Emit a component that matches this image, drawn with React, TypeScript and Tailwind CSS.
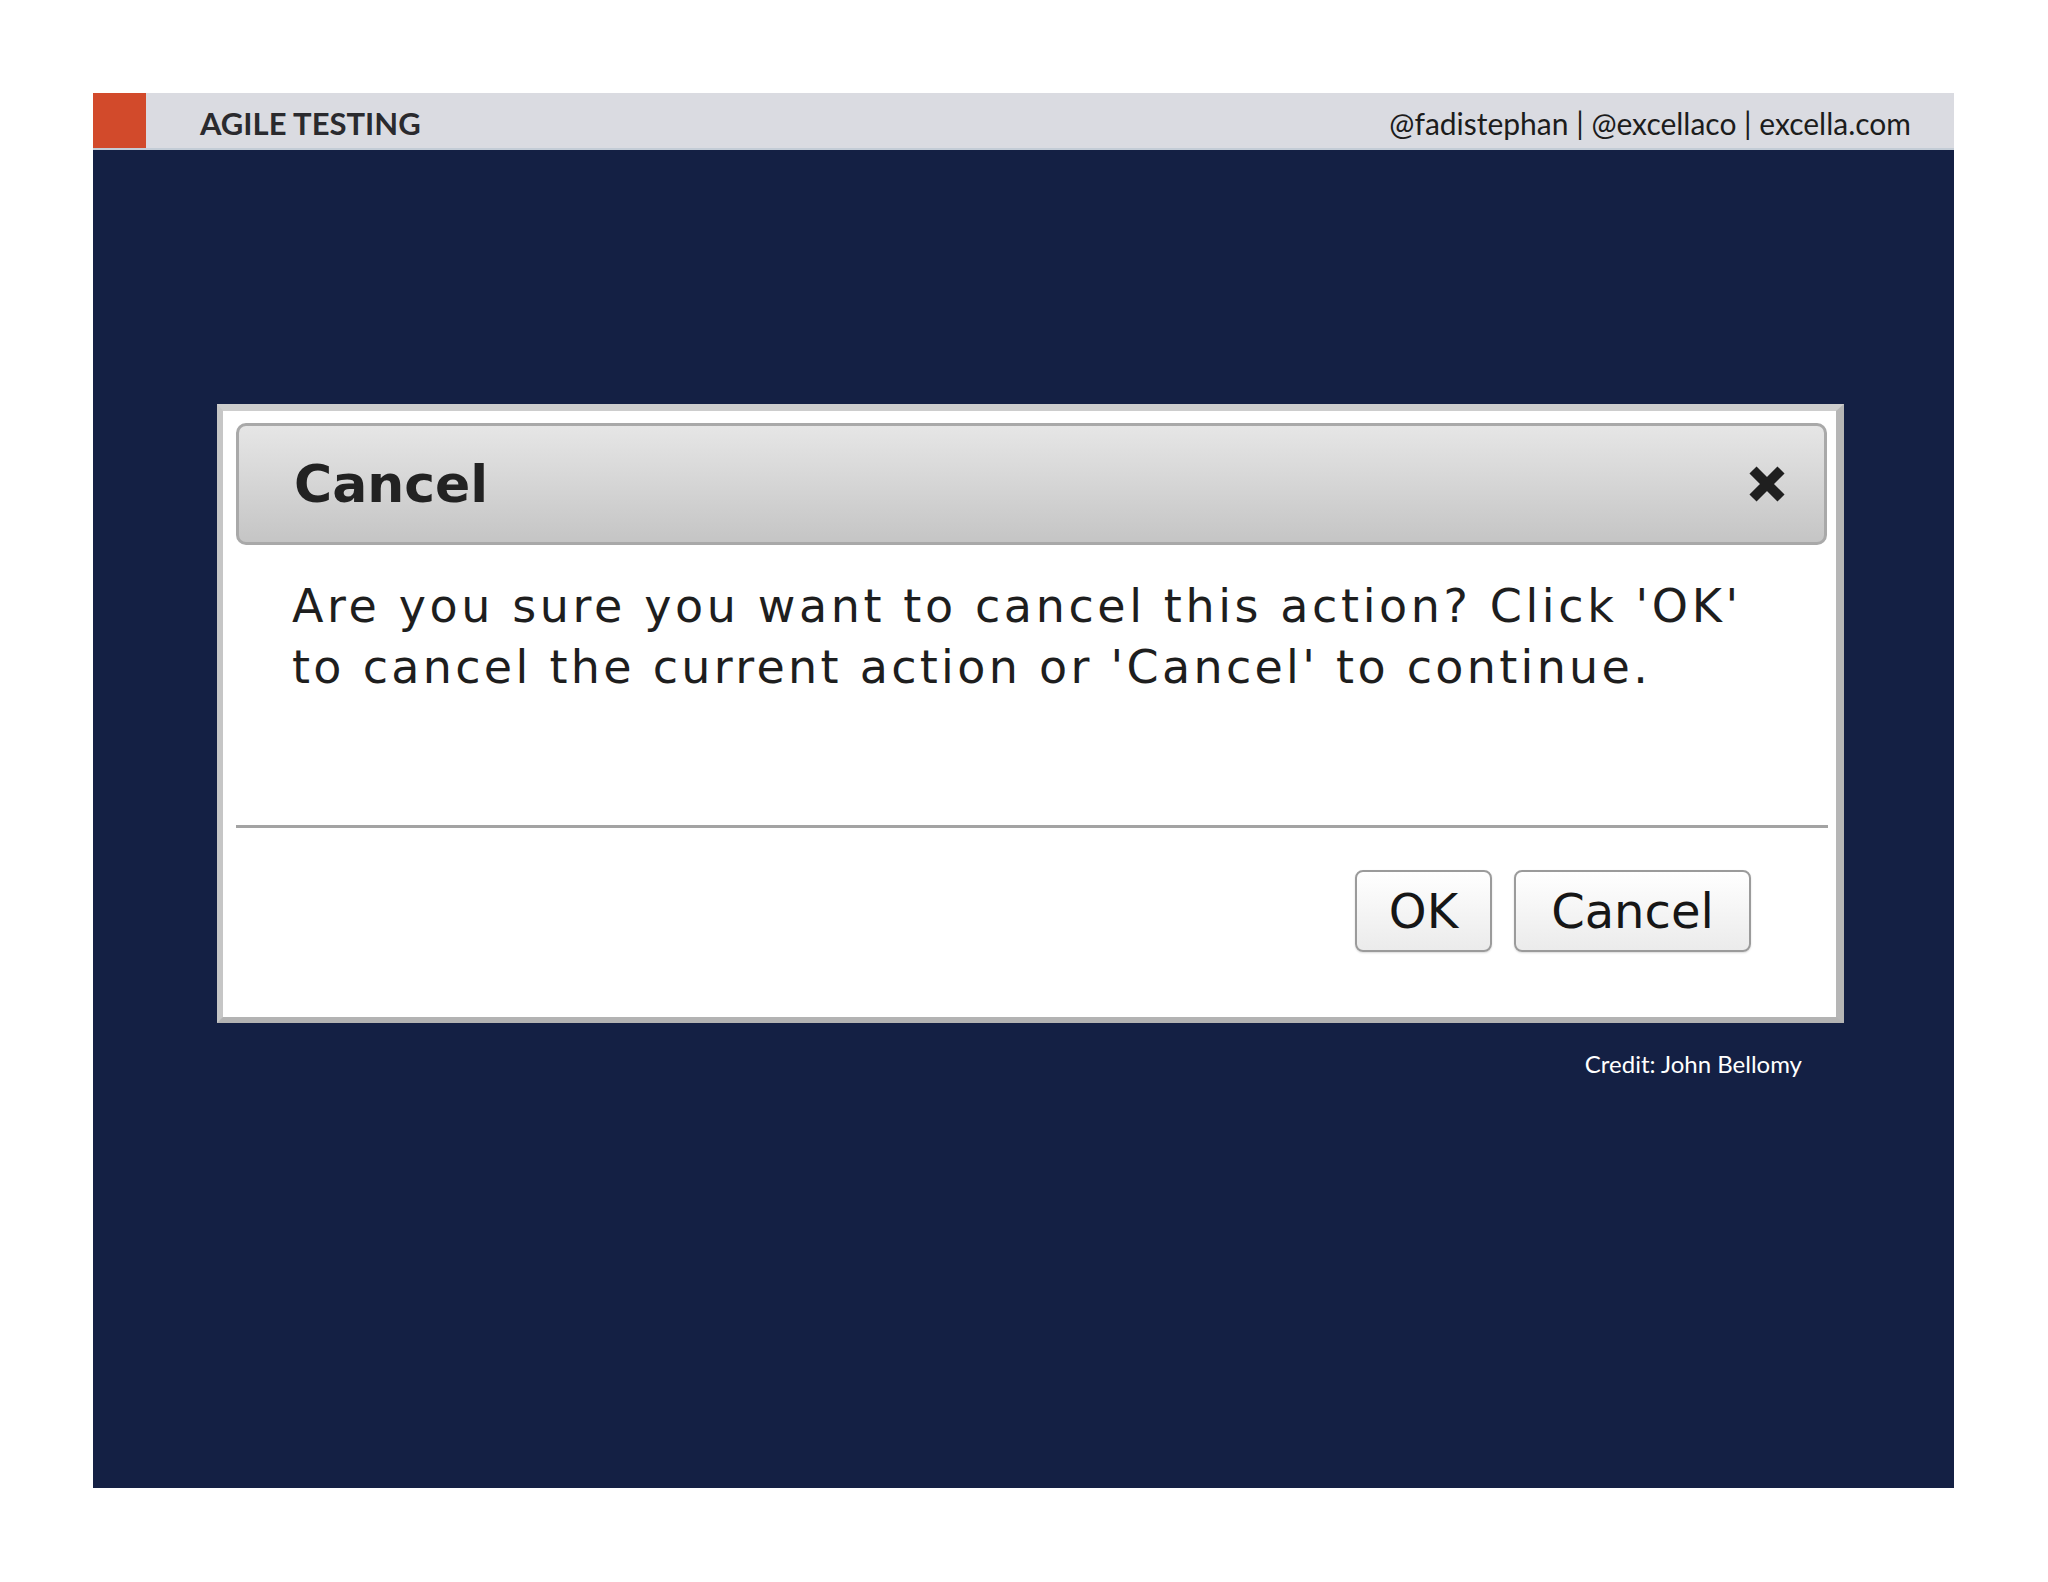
import React from "react";

function CloseIcon() {
  return (
    <svg width="38" height="36" viewBox="0 0 38 36" aria-hidden="true">
      <path
        d="M5 4 L33 32 M33 4 L5 32"
        stroke="#1f1f1f"
        strokeWidth="10"
        strokeLinecap="butt"
        fill="none"
      />
    </svg>
  );
}

function DialogButton({ label, width }: { label: string; width: string }) {
  return (
    <button
      className={`${width} h-[82px] rounded-[8px] border-2 border-[#9b9b9b] bg-linear-to-b from-white to-[#ebebeb] text-[48px] leading-none text-[#161616] shadow-[0_1px_2px_rgba(0,0,0,0.15)]`}
      style={{ fontFamily: '"DejaVu Sans", Verdana, sans-serif' }}
    >
      {label}
    </button>
  );
}

export default function App() {
  return (
    <div className="min-h-screen bg-white pt-[93px] pl-[93px]">
      <div className="w-[1861px] h-[1395px] bg-[#142044] flex flex-col">
        {/* Barra superior */}
        <header className="h-[57px] flex bg-[#dadbe1] border-b-2 border-[#c3ccd6]">
          <div className="w-[53px] bg-[#d24a2b]" />
          <div
            className="flex-1 flex items-center justify-between pl-[54px] pr-[43px] pt-[5px]"
            style={{ fontFamily: "Lato, 'Open Sans', sans-serif" }}
          >
            <span className="text-[31px] font-bold text-[#2a2a2e] leading-none">
              AGILE TESTING
            </span>
            <span className="text-[30px] text-[#1c1c1c] leading-none">
              @fadistephan | @excellaco | excella.com
            </span>
          </div>
        </header>

        {/* Contenido */}
        <main className="flex-1 pl-[124px] pt-[254px]">
          <div className="w-[1627px] h-[619px] flex flex-col bg-white border-t-[7px] border-l-[6px] border-r-[8px] border-b-[6px] border-t-[#cdcdcd] border-l-[#c6c6c6] border-r-[#b6b6b6] border-b-[#b3b3b3]">
            <div className="mt-[12px] ml-[13px] mr-[9px] h-[122px] flex items-center justify-between rounded-[10px] border-[3px] border-[#a9a9a9] bg-linear-to-b from-[#e6e6e6] to-[#c5c5c5] pl-[55px] pr-[38px]">
              <span
                className="text-[52px] font-bold leading-none text-[#222]"
                style={{ fontFamily: '"DejaVu Sans", Verdana, sans-serif' }}
              >
                Cancel
              </span>
              <CloseIcon />
            </div>

            <p
              className="mt-[31px] ml-[69px] text-[46px] leading-[61px] text-[#1e1e1e] whitespace-nowrap"
              style={{ fontFamily: '"DejaVu Sans", Verdana, sans-serif' }}
            >
              <span className="block tracking-[3.6px]">
                Are you sure you want to cancel this action? Click 'OK'
              </span>
              <span className="block tracking-[3.3px]">
                to cancel the current action or 'Cancel' to continue.
              </span>
            </p>

            <div className="mt-[127px] ml-[13px] mr-[8px] h-[3px] bg-[#a3a3a3]" />

            <div className="mt-[42px] flex justify-end gap-[22px] pr-[85px]">
              <DialogButton label="OK" width="w-[137px]" />
              <DialogButton label="Cancel" width="w-[237px]" />
            </div>
          </div>

          <p
            className="w-[1627px] pr-[42px] pt-[29px] text-right text-[24px] leading-none text-white"
            style={{ fontFamily: "Lato, 'Open Sans', sans-serif" }}
          >
            Credit: John Bellomy
          </p>
        </main>
      </div>
    </div>
  );
}
